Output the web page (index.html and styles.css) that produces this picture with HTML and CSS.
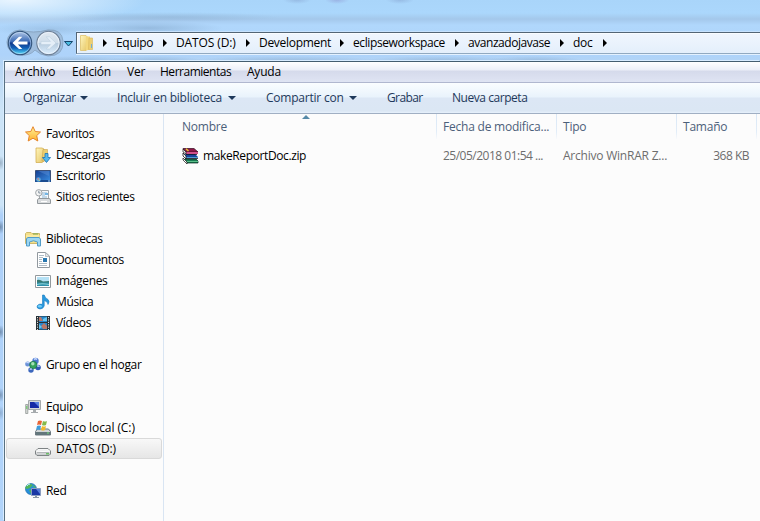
FILE: index.html
```html
<!DOCTYPE html>
<html lang="es">
<head>
<meta charset="utf-8">
<title>doc</title>
<link rel="stylesheet" href="styles.css">
</head>
<body>
<svg class="defs" width="0" height="0" aria-hidden="true">
  <defs>
    <linearGradient id="back" x1="0" y1="0" x2="0" y2="1"><stop offset="0" stop-color="#b5cae8"/><stop offset=".44" stop-color="#3969b5"/><stop offset=".5" stop-color="#10398b"/><stop offset=".72" stop-color="#1262b8"/><stop offset="1" stop-color="#5be6ff"/></linearGradient>
    <linearGradient id="forward" x1="0" y1="0" x2="0" y2="1"><stop offset="0" stop-color="#e1e9f1"/><stop offset=".48" stop-color="#d0deea"/><stop offset=".52" stop-color="#b9cddf"/><stop offset="1" stop-color="#dcefff"/></linearGradient>
    <linearGradient id="yellow" x1="0" y1="0" x2="1" y2="1"><stop offset="0" stop-color="#fff6bd"/><stop offset="1" stop-color="#e5c565"/></linearGradient>
    <linearGradient id="blue" x1="0" y1="0" x2="1" y2="1"><stop offset="0" stop-color="#153e91"/><stop offset="1" stop-color="#398de2"/></linearGradient>
    <linearGradient id="metal" x1="0" y1="0" x2="0" y2="1"><stop offset="0" stop-color="#fff"/><stop offset="1" stop-color="#c2c5c7"/></linearGradient>
    <linearGradient id="star" x1="0" y1="0" x2="0" y2="1"><stop offset="0" stop-color="#fff499"/><stop offset="1" stop-color="#ffb02e"/></linearGradient>
  </defs>
</svg>
<div class="desktop">
  <header class="nav">
    <svg class="history" width="72" height="30" viewBox="0 0 72 30">
      <path d="M14 2Q27 6 42 2Q56 1 57 13Q58 28 42 28Q34 27 29 22Q24 28 14 27Q1 25 1 14Q2 3 14 2Z" fill="#93acc7" stroke="#71869c" opacity=".55"/>
      <circle cx="14" cy="15" r="11.700" fill="url(#back)" stroke="#34567e" stroke-width="1.200"/>
      <circle cx="14" cy="15" r="10.700" fill="none" stroke="#d3e9ff" stroke-width=".7" opacity=".8"/>
      <path d="M6.500 15L13 8.800H16.300L12 13.400H21.500V16.600H12L16.300 21H13Z" fill="#fff"/>
      <circle cx="42.500" cy="15" r="11.700" fill="url(#forward)" stroke="#718399" stroke-width="1.200"/>
      <circle cx="42.500" cy="15" r="10.600" fill="none" stroke="#f1f8ff" stroke-width=".8"/>
      <path d="M50 15L43.500 8.800H40.200L44.500 13.400H35V16.600H44.500L40.200 21H43.500Z" fill="#e5eff8" stroke="#b7cbdd" stroke-width=".5"/>
      <path d="M58.500 13.500H66.500L62.500 18Z" fill="#49bce1" stroke="#14456b"/>
    </svg>
    <div class="address">
      <svg class="folder" width="16" height="16" viewBox="0 0 16 16"><path d="M1.500 .5H7L8.500 2V14L7 15.500H1.500Z" fill="url(#yellow)" stroke="#dcbd62" stroke-width=".7"/><path d="M7 3V1.500H11V14.500L7 15.500Z" fill="#f3d87e"/><path d="M10 3H13.500V14.500H9.500Z" fill="#edcf72" stroke="#d8b65b" stroke-width=".6"/><path d="M12.500 9V13" stroke="#6fb0d9"/></svg>
      <i class="sep first"></i>
      <div class="crumb w1"><span>Equipo</span><i class="sep"></i></div>
      <div class="crumb w2"><span class="wide">DATOS (D:)</span><i class="sep"></i></div>
      <div class="crumb w3"><span>Development</span><i class="sep"></i></div>
      <div class="crumb w4"><span>eclipseworkspace</span><i class="sep"></i></div>
      <div class="crumb w5"><span>avanzadojavase</span><i class="sep"></i></div>
      <div class="crumb w6"><span>doc</span><i class="sep"></i></div>
    </div>
  </header>
  <div class="window">
    <nav class="menu"><span class="m1">Archivo</span><span class="m2">Edición</span><span class="m3">Ver</span><span class="m4">Herramientas</span><span>Ayuda</span></nav>
    <div class="toolbar">
      <span class="t1">Organizar<i class="drop"></i></span><span class="t2">Incluir en biblioteca<i class="drop"></i></span><span class="t3">Compartir con<i class="drop"></i></span><span class="t4">Grabar</span><span class="t5">Nueva carpeta</span>
    </div>
    <main class="content">
      <aside class="tree">
        <div class="row"><svg viewBox="0 0 16 16"><path d="M8 .7L10.200 5.500L15.500 6L11.700 9.600L12.800 15L8 12.200L3.200 15L4.300 9.600L.5 6L5.800 5.500Z" fill="url(#star)" stroke="#e5852c"/></svg><span>Favoritos</span></div>
        <div class="row child"><svg viewBox="0 0 16 16"><path d="M1 1H7L9 2V14L7 15.500H1Z" fill="url(#yellow)" stroke="#d0a744" stroke-width=".7"/><path d="M8 2.500H12.500V14H7Z" fill="#ebcf70" stroke="#c9a34e" stroke-width=".6"/><path d="M10 6.500H13V10.500H15.500L11.500 15.500L7.500 10.500H10Z" fill="#55b9ee" stroke="#1672b9" stroke-width=".8"/></svg><span>Descargas</span></div>
        <div class="row child"><svg viewBox="0 0 16 16"><path d="M.5 2.500H15.500V13H.5Z" fill="url(#blue)" stroke="#3b5079"/><path d="M3 3L14 3V8Z" fill="#6495dc" opacity=".4"/><path d="M0 12H16V14H0Z" fill="#1b4c90"/><circle cx="3.500" cy="11.500" r="2.300" fill="#58a8df"/><path d="M2.500 10.300h1.200v1.200H2.500Z" fill="#f66"/><path d="M3.700 11.700h1v1h-1Z" fill="#ffe04c"/><path d="M13 13h2" stroke="#a7d0f5"/></svg><span>Escritorio</span></div>
        <div class="row child"><svg viewBox="0 0 16 16"><path d="M4.500 1.500H13.500V11H4.500Z" fill="#f6f8f9" stroke="#a2a8ac"/><path d="M7 4h5M7 6h3M7 8h5" stroke="#8bb7d8"/><path d="M10 4h3v2h-3Z" fill="#73b6e5"/><path d="M3.500 9.500H14.500L15.500 11V14.500H2.500V11Z" fill="#d9dcde" stroke="#92989c"/><path d="M6 12.500h6" stroke="#fff"/><circle cx="3.800" cy="3.800" r="3.200" fill="#f3f4f4" stroke="#9fa5a9"/><path d="M3.800 1.800V4H5.500" fill="none" stroke="#657889" stroke-width=".8"/></svg><span>Sitios recientes</span></div>
        <div class="row group"><svg viewBox="0 0 16 16"><path d="M.5 2.500L1.500 1.500H6L7 2.500H14.500V12.500H.5Z" fill="#f5e08a" stroke="#cfb96b"/><path d="M1 5h14" stroke="#fff4b4"/><path d="M8 3h5" stroke="#7ba84e"/><path d="M1.500 7.500L3 6.500H14L15.500 8V15H12.500V11Q8.500 8.500 4.500 11V15H1.500Z" fill="#9bd6f3" stroke="#529cc8"/></svg><span>Bibliotecas</span></div>
        <div class="row child"><svg viewBox="0 0 16 16"><path d="M2.500.5H10.500L14.500 4V15.500H2.500Z" fill="#fff" stroke="#92999f"/><path d="M10.500.5V4.500H14.500Z" fill="#e1e5e7" stroke="#a4abb0" stroke-width=".7"/><path d="M4 3.500h5M4 5.500h4M4 7.500h3M4 9.500h3M4 11.500h8M4 13.500h8" stroke="#9aabb8" stroke-width=".8"/><path d="M8 6h4v4H8Z" fill="#2877af"/></svg><span>Documentos</span></div>
        <div class="row child"><svg viewBox="0 0 16 16"><path d="M.5 2.500H15.500V14.500H.5Z" fill="#fff" stroke="#92999d"/><path d="M2 4H14V13H2Z" fill="#b5e1f5"/><path d="M2 7Q5 6 8 8.500L14 8V10H2Z" fill="#397971"/><path d="M2 9.500H14V13H2Z" fill="#2e8fab"/><path d="M2 11Q7 9.500 14 11V12Q7 10.500 2 12Z" fill="#8dd4d5"/></svg><span>Imágenes</span></div>
        <div class="row child"><svg viewBox="0 0 16 16"><path d="M7.500 1H9.200Q10 4 13 5.500Q15 7.500 13 10.500Q13 7.500 9.200 6.500V12Q8 15 5 15Q1.500 14.500 2 12Q3.500 9.500 7.500 10.200Z" fill="#2998de" stroke="#147bc0" stroke-width=".6"/><ellipse cx="4.800" cy="12.300" rx="2" ry="1.300" fill="#74cdf6"/></svg><span>Música</span></div>
        <div class="row child"><svg viewBox="0 0 16 16"><path d="M1 1H15V15H1Z" fill="#293136"/><path d="M4 1.500H12V7H4ZM4 8H12V14.500H4Z" fill="#2687cc"/><path d="M4 2L6 2L8 6H4ZM9 8L12 11V14H8L6 11Z" fill="#b97869"/><path d="M8 4L12 2V6H8ZM4 9L7 12L4 14Z" fill="#68c6ef"/><path d="M2.500 2V15M13.500 2V15" stroke="#dce0df" stroke-dasharray="1.200 1.200"/></svg><span>Vídeos</span></div>
        <div class="row group"><svg viewBox="0 0 16 16"><circle cx="10.500" cy="4" r="3.200" fill="#4f79d0"/><circle cx="2.700" cy="7" r="2.500" fill="#6a91d8"/><circle cx="13" cy="10.500" r="2.800" fill="#3258b5"/><circle cx="6" cy="13" r="2.700" fill="#3c67bd"/><circle cx="8.300" cy="8" r="3.700" fill="#35a35c" stroke="#17704c" stroke-width=".7"/><circle cx="7.800" cy="6.800" r="1.700" fill="#a6e1b7"/><path d="M9 2.500Q10.500 1 12 2.500M1.500 6Q2.500 4.800 4 6M12 9.200Q13 8.300 14.500 9.500M4.800 12.500Q6 11.200 7 12.500" fill="none" stroke="#c9dcff" stroke-width="1.200"/></svg><span>Grupo en el hogar</span></div>
        <div class="row group"><svg viewBox="0 0 16 16"><path d="M3.500 1.500H15.500V10.500H3.500Z" fill="#d6d9db" stroke="#a4a9ac"/><path d="M5 3H14V9H5Z" fill="#1629a5"/><path d="M9 3H14V8Z" fill="#587fe0"/><path d="M8 11h3v2h2v1H6v-1h2Z" fill="#a6abae"/><path d="M.7 5.500H2.800V14.500H.7Z" fill="#d7dbd9" stroke="#919794" stroke-width=".8"/><path d="M1.800 7v3" stroke="#62c95b"/></svg><span>Equipo</span></div>
        <div class="row child"><svg viewBox="0 0 16 16"><path d="M2.500 9H13.500L15.500 11.500V15H.5V11.500Z" fill="#d0d5d7" stroke="#6c7980"/><path d="M1 12H15V15H1Z" fill="#63777c"/><path d="M12 13h2" stroke="#71e678" stroke-width="1.200"/><path d="M3 1Q5 0 7 1L6 5Q4 4 2 5Z" fill="#e76435"/><path d="M8 1Q10 2 12 1L11 5Q9 6 7 5Z" fill="#85b949"/><path d="M2 6Q4 5 6 6L5 10Q3 9 1 10Z" fill="#3e9cda"/><path d="M7 6Q9 7 11 6L10 10Q8 11 6 10Z" fill="#f0b82c"/></svg><span class="wide">Disco local (C:)</span></div>
        <div class="row child selected"><svg viewBox="0 0 16 16"><path d="M3 7.500H13L15.500 10V13L14 14.500H2L.5 13V10Z" fill="url(#metal)" stroke="#7e8385"/><path d="M1 10Q8 11 15 10" fill="none" stroke="#fff"/><path d="M2 11.500h12" stroke="#a9adaf" stroke-width=".8"/><path d="M11 12.800h3" stroke="#51b84c" stroke-width="1.200"/></svg><span class="wide">DATOS (D:)</span></div>
        <div class="row group"><svg viewBox="0 0 16 16"><circle cx="6" cy="6" r="5.500" fill="#278edb" stroke="#206eab" stroke-width=".7"/><path d="M2 2Q5 0 8 2L5 5L2 6L0 5ZM4 7L7 6L8 10L6 11ZM9 2L11 5L8 4Z" fill="#51b55b"/><path d="M2 3Q3 1 5 1" fill="none" stroke="#bdf2ff"/><path d="M6.500 5.500H15.500V12.500H6.500Z" fill="#1a38a5" stroke="#8b9dc0"/><path d="M11 6h4v5Z" fill="#597fdb"/><path d="M10 13h2v1h2v1H8v-1h2Z" fill="#8997a6"/></svg><span>Red</span></div>
      </aside>
      <section class="files">
        <div class="head cols"><span class="name">Nombre</span><span>Fecha de modifica...</span><span>Tipo</span><span>Tamaño</span><i class="sort"></i></div>
        <div class="file cols"><div class="name"><svg width="17" height="16" viewBox="0 0 17 16"><path d="M1 .5H12L16 4H4Z" fill="#8d1747" stroke="#34091c" stroke-width=".7"/><path d="M4 4H16V6H4Z" fill="#d0508a"/><path d="M1 1L4 4V6L1 4Z" fill="#eee" stroke="#111" stroke-width=".7"/><path d="M3 6H13L16 9H4Z" fill="#17459c"/><path d="M4 9H16V10H4Z" fill="#4f9cd0"/><path d="M1 5L4 8V11L1 8Z" fill="#fff" stroke="#111" stroke-width=".8"/><path d="M3 11H14L16 13V15H5L2 12Z" fill="#167950" stroke="#08251d" stroke-width=".7"/><path d="M5 13.500H16" stroke="#5bc08a"/><path d="M1 10L5 14V16L1 12Z" fill="#fff" stroke="#111" stroke-width=".7"/><path d="M4 .8L6.500 3" fill="none" stroke="#e9c333" stroke-width="1.500"/><path d="M4 6.500H15M4 10.500H16" stroke="#151525" stroke-width=".8"/></svg><span>makeReportDoc.zip</span></div><span class="date">25/05/2018 01:54 ...</span><span>Archivo WinRAR Z...</span><span class="size">368 KB</span></div>
      </section>
    </main>
  </div>
</div>
</body>
</html>
```

FILE: styles.css
```css
* { box-sizing: border-box; }
body { margin: 0; overflow: hidden; font: 12px/16px "Open Sans", "Noto Sans", sans-serif; letter-spacing: -0.22px; color: #000; }
.defs { position: absolute; }
.desktop {
  width: 760px;
  height: 521px;
  display: flex;
  flex-direction: column;
  background:
    radial-gradient(ellipse 75px 7px at 148px 28px, #6f91b466, transparent),
    radial-gradient(ellipse 60px 7px at 50px 29px, #6f91b444, transparent),
    radial-gradient(ellipse 110px 5px at 170px 17px, #7f9fbf55, transparent),
    radial-gradient(ellipse 14px 4px at 297px 0, #7288b855, transparent),
    radial-gradient(ellipse 12px 4px at 337px 0, #7d70b855, transparent),
    radial-gradient(ellipse 14px 4px at 400px 0, #7288b855, transparent),
    radial-gradient(ellipse 60px 5px at 75px 61px, #6788aa55, transparent),
    radial-gradient(ellipse 50px 5px at 155px 61px, #6788aa55, transparent),
    radial-gradient(ellipse 100px 5px at 285px 61px, #6788aa55, transparent),
    radial-gradient(ellipse 80px 5px at 440px 61px, #6788aa55, transparent),
    radial-gradient(ellipse 50px 5px at 535px 61px, #6788aa55, transparent),
    radial-gradient(ellipse 6px 7px at 0 163px, #6f859c88, transparent),
    radial-gradient(ellipse 6px 7px at 0 227px, #48617d99, transparent),
    radial-gradient(ellipse 6px 7px at 0 332px, #48617d99, transparent),
    radial-gradient(ellipse 6px 7px at 0 395px, #48617d88, transparent),
    radial-gradient(ellipse 6px 7px at 0 413px, #48617d55, transparent),
    radial-gradient(ellipse 130px 25px at 15px 0, #e9f5ff, transparent),
    linear-gradient(#a9d5fa 0, #abd7fc 13px, #a4c8eb 19px, #b0d7fc 25px, #aed3fa 55px, #b5d5f4 64px, #cce4f7 110px, #cce4f7 205px, #add0f9 215px, #b1d4fa 100%);
}
.nav { height: 61px; padding: 28px 0 0 6px; display: flex; align-items: flex-start; flex: none; }
.history { flex: none; margin-right: -2px; }
.address { flex: 1; height: 22px; margin-top: 4px; padding-left: 2px; display: flex; align-items: center; background: linear-gradient(#f0f6fe, #e4effb); border: solid #536575; border-width: 1px 0 1px 1px; border-bottom-color: #91a9c0; box-shadow: 0 1px 0 #e3f1ff, 0 -1px 0 #c7e2fd, inset 1px 1px 0 #f9fcff; }
.folder { flex: none; }
.sep { width: 0; height: 0; border: solid transparent; border-width: 4px 0 4px 4px; border-left-color: #000; flex: none; }
.sep.first { margin: 0 9px 0 8px; }
.crumb { display: flex; align-items: center; justify-content: space-between; padding-right: 9px; white-space: nowrap; flex: none; letter-spacing: -0.3px; }
.crumb .wide { letter-spacing: -0.12px; }
.w1 { width: 60px; }
.w2 { width: 83px; }
.w3 { width: 94px; }
.w4 { width: 115px; letter-spacing: -0.4px; }
.w5 { width: 105px; letter-spacing: -0.45px; }
.w6 { width: 43px; }
.window { flex: 1; margin-left: 4px; display: flex; flex-direction: column; border-left: 1px solid #587080; border-top: 1px solid #455e70; background: #fcfcfc; box-shadow: -1px -1px 0 #d8ecff; min-height: 0; }
.menu { height: 21px; display: flex; align-items: center; padding-left: 10px; background: linear-gradient(#fff 0, #eceff8 8px, #d5daeb 9px, #dfe4f3 100%); border-bottom: 1px solid #b0b7cf; flex: none; white-space: nowrap; }
.m1 { width: 57px; }
.m2 { width: 55px; }
.m3 { width: 33px; }
.m4 { width: 87px; letter-spacing: -0.48px; }
.toolbar { height: 31px; display: flex; align-items: center; padding-left: 18px; color: #1e395b; background: linear-gradient(#fafdff 0, #e9f3fc 14px, #dce7f5 15px, #dbe7f4 28px, #e7f1fc 100%); border-bottom: 1px solid #a0afc3; flex: none; white-space: nowrap; }
.toolbar span { display: flex; align-items: center; justify-content: space-between; }
.t1 { width: 65px; margin-right: 29px; }
.t2 { width: 119px; margin-right: 30px; }
.t3 { width: 91px; margin-right: 30px; }
.toolbar .t4 { width: 65px; letter-spacing: -0.6px; }
.t5 { letter-spacing: -0.45px; }
.drop { border: solid transparent; border-width: 4px 4px 0; border-top-color: #1e395b; }
.content { flex: 1; display: flex; min-height: 0; }
.tree { width: 159px; padding: 9px 1px 0; border-right: 1px solid #d9e5f3; flex: none; letter-spacing: -0.35px; }
.tree .wide { letter-spacing: -0.08px; }
.row { height: 21px; display: flex; align-items: center; gap: 5px; padding-left: 19px; white-space: nowrap; }
.row svg { width: 16px; height: 16px; flex: none; }
.child { padding-left: 29px; }
.group { margin-top: 21px; }
.selected { border: 1px solid #d9d9d9; border-radius: 3px; padding-left: 28px; background: linear-gradient(#f8f8f8, #e6e6e6); }
.files { flex: 1; min-width: 0; }
.cols { display: grid; grid-template-columns: 273px 120px 120px 80px 1fr; white-space: nowrap; }
.cols > span { padding-left: 6px; }
.cols > .name { padding-left: 18px; }
.head { position: relative; height: 24px; line-height: 25px; color: #4c607a; }
.head > span { border-right: 1px solid; border-image: linear-gradient(#d9e7f6, #e2edf8 70%, #fcfcfc) 1; }
.sort { position: absolute; left: 138px; top: 1px; border: solid transparent; border-width: 0 4px 4px; border-bottom-color: #568aa8; }
.file { height: 22px; margin-top: 7px; align-items: center; color: #6d6d6d; }
.file .name { display: flex; align-items: center; gap: 4px; color: #000; letter-spacing: -0.38px; }
.file .date { letter-spacing: -0.5px; }
.file .size { text-align: right; padding-right: 8px; letter-spacing: -0.5px; }
```
